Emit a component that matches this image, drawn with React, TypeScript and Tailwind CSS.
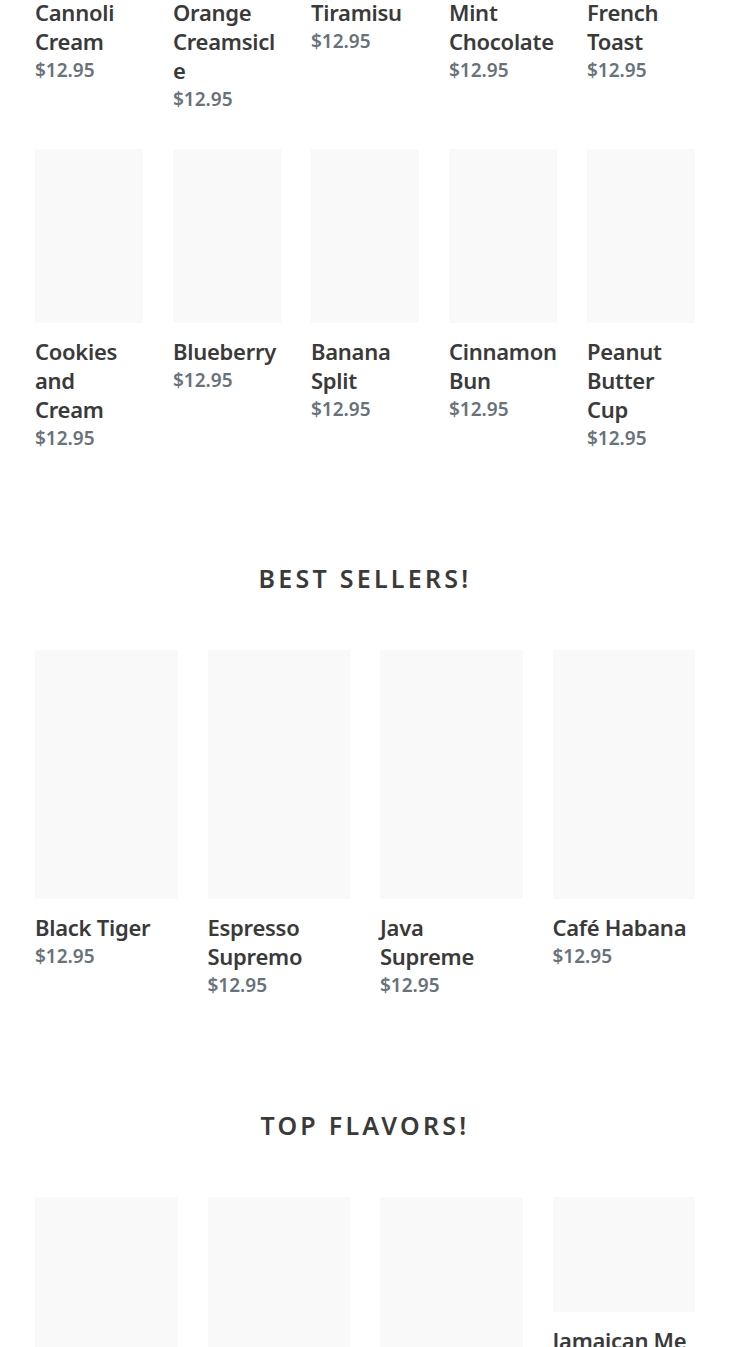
type Product = { title: string; price: string; img?: string };

const flavorsTop: Product[] = [
  { title: "Cannoli Cream", price: "$12.95" },
  { title: "Orange Creamsicle", price: "$12.95" },
  { title: "Tiramisu", price: "$12.95" },
  { title: "Mint Chocolate", price: "$12.95" },
  { title: "French Toast", price: "$12.95" },
  { title: "Cookies and Cream", price: "$12.95" },
  { title: "Blueberry", price: "$12.95" },
  { title: "Banana Split", price: "$12.95" },
  { title: "Cinnamon Bun", price: "$12.95" },
  { title: "Peanut Butter Cup", price: "$12.95" },
];

const bestSellers: Product[] = [
  { title: "Black Tiger", price: "$12.95" },
  { title: "Espresso Supremo", price: "$12.95" },
  { title: "Java Supreme", price: "$12.95" },
  { title: "Café Habana", price: "$12.95" },
];

const topFlavors: Product[] = [
  { title: "Hazelnut Cream", price: "$12.95", img: "h-[249px]" },
  { title: "Vanilla Bean", price: "$12.95", img: "h-[249px]" },
  { title: "Salted Caramel", price: "$12.95", img: "h-[249px]" },
  { title: "Jamaican Me Crazy", price: "$12.95", img: "h-[115px]" },
];

function ProductCard({ product, imgClass }: { product: Product; imgClass: string }) {
  return (
    <div className="mb-[35px] min-w-0">
      <div className={`w-full bg-[#f9f9f9] ${product.img ?? imgClass}`} />
      <div className="mt-[14px]">
        <div className="text-[22px] leading-[29px] font-semibold tracking-[-0.27px] text-[#3a3a3a] break-words">
          {product.title}
        </div>
        <div className="text-[19px] leading-[29px] font-semibold text-[#69727b]">{product.price}</div>
      </div>
    </div>
  );
}

function Section({ heading, products }: { heading: string; products: Product[] }) {
  return (
    <section className="pt-[41px]">
      <h2 className="text-center text-[25px] leading-[29px] font-semibold uppercase tracking-[0.13em] text-[#3a3a3a]">
        {heading}
      </h2>
      <div className="mt-[57px] grid grid-cols-4 gap-x-[30px]">
        {products.map((p) => (
          <ProductCard key={p.title} product={p} imgClass="h-[249px]" />
        ))}
      </div>
    </section>
  );
}

export default function App() {
  return (
    <div className="min-h-screen bg-white font-['Noto_Sans',sans-serif] overflow-hidden">
      <div className="px-[35px] -mt-[190px]">
        <div className="grid grid-cols-5 gap-x-[30px]">
          {flavorsTop.map((p) => (
            <ProductCard key={p.title} product={p} imgClass="h-[174px]" />
          ))}
        </div>

        <div className="pt-[35px]">
          <Section heading="Best Sellers!" products={bestSellers} />
        </div>
        <div className="pt-[35px]">
          <Section heading="Top Flavors!" products={topFlavors} />
        </div>
      </div>
    </div>
  );
}
